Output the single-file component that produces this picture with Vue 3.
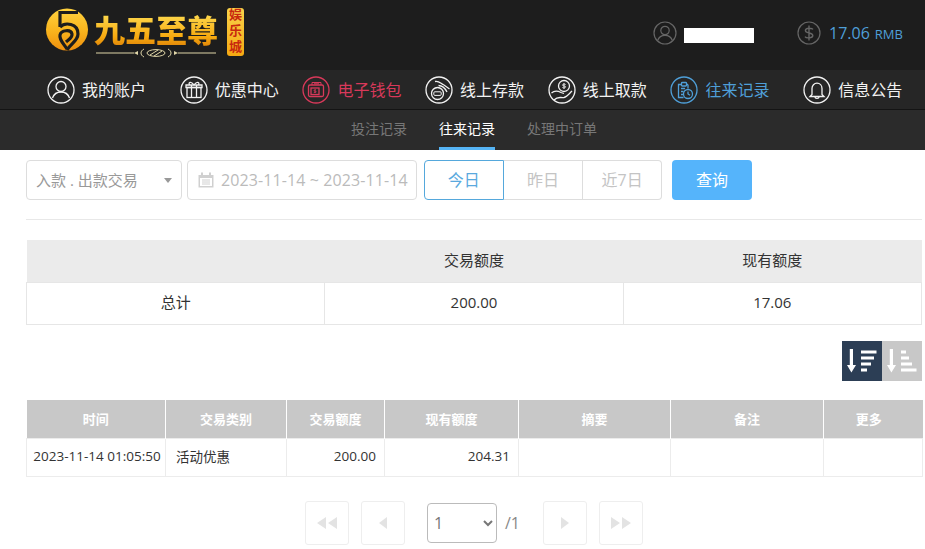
<template>
  <div class="page">
    <header class="top">
      <div class="logo">
        <svg class="logo-mark" width="46" height="46" viewBox="0 0 46 46">
          <defs>
            <linearGradient id="goldDisc" x1="0" y1="0" x2="0" y2="1">
              <stop offset="0" stop-color="#ffd23e" />
              <stop offset="0.55" stop-color="#f9b31c" />
              <stop offset="1" stop-color="#ee8f0e" />
            </linearGradient>
          </defs>
          <circle cx="22" cy="22.5" r="21" fill="url(#goldDisc)" />
          <g fill="none" stroke="#1d1d1d" stroke-width="3.2">
            <path d="M33 5.5 H15 V20" />
            <path d="M15 20 C20 15 33 16 33 27 C33 34 25 37 22 43" />
            <path d="M22 42 C19 37 14 33 15 28 C16 23 26 22 27 27 C27.5 31 23 33 21 35" />
          </g>
        </svg>
        <div class="logo-text">
          <span class="logo-name">九五至尊</span>
          <svg class="logo-rule" width="124" height="10" viewBox="0 0 124 10">
            <path d="M2 5 H40 M84 5 H122" stroke="#e0d6a8" stroke-width="1" />
            <path d="M40 5 L44 3 L44 7 Z M84 5 L80 3 L80 7 Z" fill="#e0d6a8" />
            <path d="M50 1 C46 3 46 7 50 9 M74 1 C78 3 78 7 74 9" fill="none" stroke="#e0d6a8" stroke-width="1" />
            <ellipse cx="62" cy="5" rx="9" ry="3.4" fill="none" stroke="#e0d6a8" stroke-width="1" />
            <path d="M56 7 L64 2 M60 8 L68 3" stroke="#e0d6a8" stroke-width="1" />
          </svg>
        </div>
        <div class="logo-badge">娱乐城</div>
      </div>
      <div class="account">
        <svg class="head-icon" width="24" height="24" viewBox="0 0 24 24" fill="none" stroke="#666" stroke-width="1.2">
          <circle cx="12" cy="12" r="11" />
          <circle cx="12" cy="9.5" r="4.2" />
          <path d="M4.6 19.5 C6 15.8 9 14.4 12 14.4 C15 14.4 18 15.8 19.4 19.5" />
        </svg>
        <span class="user-mask"></span>
      </div>
      <div class="balance">
        <svg class="head-icon" width="24" height="24" viewBox="0 0 24 24" fill="none" stroke="#666" stroke-width="1.2">
          <circle cx="12" cy="12" r="11" />
          <path d="M16 8.4 C15 6.8 8.4 6.4 8.4 9.6 C8.4 13 15.8 11 15.8 14.6 C15.8 17.6 9 17.4 8 15.6 M12 4.6 V19.4" stroke-width="1.4" />
        </svg>
        <span class="amount">17.06</span>
        <span class="unit">RMB</span>
      </div>
    </header>

    <nav class="main-nav">
      <a v-for="item in navItems" :key="item.label" class="nav-item" :class="item.tone">
        <svg width="28" height="28" viewBox="0 0 28 28" fill="none" stroke="currentColor" stroke-width="1.3">
          <circle cx="14" cy="14" r="13" />
          <template v-if="item.icon === 'user'">
            <circle cx="14" cy="10.5" r="5" />
            <path d="M5.5 22 C7 17.6 10.5 16 14 16 C17.5 16 21 17.6 22.5 22" />
          </template>
          <template v-else-if="item.icon === 'gift'">
            <rect x="7" y="11.5" width="14" height="10" />
            <path d="M6 9 H22 V11.5 H6 Z M11.5 9 V21.5 M16.5 9 V21.5" />
            <path d="M14 9 C11 5 8 6 9.5 9 M14 9 C17 5 20 6 18.5 9" />
          </template>
          <template v-else-if="item.icon === 'wallet'">
            <rect x="6.5" y="9" width="15" height="11.5" rx="1.5" />
            <path d="M10 9 V6.5 H19 V9 M12 7.8 H17" stroke-width="1" />
            <rect x="9" y="12" width="8" height="6.5" />
            <path d="M13 13.5 V17 M11.8 16.4 H13.8 C14.6 16 14.4 15.2 13 15.2 C11.8 15 11.6 14 12.8 13.8 H14" stroke-width="0.8" />
          </template>
          <template v-else-if="item.icon === 'deposit'">
            <circle cx="12.5" cy="17.5" r="6" />
            <rect x="8.8" y="15.8" width="7.4" height="3.6" rx="1" stroke-width="1" />
            <path d="M10 5.5 C14 4.5 16 8 19 9 L24.5 13 M13.5 9.5 C17 9.5 20 12 22 16" />
          </template>
          <template v-else-if="item.icon === 'withdraw'">
            <circle cx="16" cy="10" r="5.5" />
            <path d="M16 7 V13 M14.4 11.5 C15.4 12.2 17.6 12 17.6 10.8 C17.6 9.4 14.5 10.6 14.5 9.1 C14.5 8 16.6 7.8 17.6 8.5" stroke-width="0.9" />
            <path d="M3.5 17 C7 14 10 15 13 16.5 L16 17.5 M6 24 C10 20 12 22 16 21.5 C19 21 21 18 24 15" />
          </template>
          <template v-else-if="item.icon === 'record'">
            <path d="M18 8.5 H16 M12 8.5 H8.5 V21.5 H13.5 M18 8.5 V12.5 M11 12.5 H15 M11 15.5 H13.5 M11 18.5 H13" />
            <rect x="11.5" y="6.5" width="5" height="3.5" rx="0.8" />
            <circle cx="18" cy="18" r="4.5" />
            <path d="M18 15.5 V18 L20 19.2" />
          </template>
          <template v-else>
            <path d="M9 18.5 V12.5 C9 9.4 11.2 7.2 14 7.2 C16.8 7.2 19 9.4 19 12.5 V18.5 L21 20.5 H7 Z" />
            <path d="M12 20.5 C12 23 16 23 16 20.5" />
          </template>
        </svg>
        <span>{{ item.label }}</span>
      </a>
    </nav>

    <div class="sub-nav">
      <a v-for="tab in subTabs" :key="tab" class="sub-tab" :class="{ active: tab === '往来记录' }">{{ tab }}</a>
    </div>

    <main class="content">
      <div class="filters">
        <div class="type-select">
          <span>入款 . 出款交易</span>
          <i class="caret"></i>
        </div>
        <div class="date-range">
          <svg width="18" height="18" viewBox="0 0 18 18">
            <path d="M1.5 4 H16.5 V16.5 H1.5 Z" fill="#d0d0d0" />
            <rect x="4" y="1.5" width="2" height="4" fill="#d0d0d0" />
            <rect x="12" y="1.5" width="2" height="4" fill="#d0d0d0" />
            <rect x="3" y="7" width="12" height="8" fill="#fff" />
            <path d="M5 9 H13 M5 11 H13 M5 13 H13" stroke="#d0d0d0" stroke-width="1" />
          </svg>
          <span>2023-11-14 ~ 2023-11-14</span>
        </div>
        <div class="day-group">
          <button v-for="d in days" :key="d" class="day" :class="{ active: d === '今日' }">{{ d }}</button>
        </div>
        <button class="search">查询</button>
      </div>

      <table class="summary">
        <thead>
          <tr><th></th><th>交易额度</th><th>现有额度</th></tr>
        </thead>
        <tbody>
          <tr><td>总计</td><td>200.00</td><td>17.06</td></tr>
        </tbody>
      </table>

      <div class="sort-bar">
        <button class="sort dark">
          <svg width="30" height="24" viewBox="0 0 30 24" fill="#fff">
            <path d="M2.8 0 H6 V16 H9 L4.4 23.5 L0 16 H2.8 Z" />
            <path d="M14 1.5 H29.5 V4.5 H14 Z M14 7.5 H27 V10.5 H14 Z M14 13.5 H24 V16.5 H14 Z M14 19.5 H20 V22.5 H14 Z" />
          </svg>
        </button>
        <button class="sort light">
          <svg width="30" height="24" viewBox="0 0 30 24" fill="#fff">
            <path d="M2.8 0 H6 V16 H9 L4.4 23.5 L0 16 H2.8 Z" />
            <path d="M14 1.5 H19 V4.5 H14 Z M14 7.5 H22 V10.5 H14 Z M14 13.5 H25 V16.5 H14 Z M14 19.5 H29.5 V22.5 H14 Z" />
          </svg>
        </button>
      </div>

      <table class="records">
        <colgroup>
          <col v-for="c in columns" :key="c.label" :style="{ width: c.width + 'px' }" />
        </colgroup>
        <thead>
          <tr><th v-for="c in columns" :key="c.label">{{ c.label }}</th></tr>
        </thead>
        <tbody>
          <tr>
            <td class="nowrap">2023-11-14 01:05:50</td>
            <td class="left">活动优惠</td>
            <td class="right">200.00</td>
            <td class="right">204.31</td>
            <td></td>
            <td></td>
            <td></td>
          </tr>
        </tbody>
      </table>

      <div class="pager">
        <button class="page-btn first">
          <svg width="22" height="14" viewBox="0 0 22 14" fill="#e3e3e3"><path d="M10 1 V13 L1 7 Z M21 1 V13 L12 7 Z" /></svg>
        </button>
        <button class="page-btn">
          <svg width="10" height="14" viewBox="0 0 10 14" fill="#e3e3e3"><path d="M9 1 V13 L1 7 Z" /></svg>
        </button>
        <select class="page-select"><option>1</option></select>
        <span class="page-total">/1</span>
        <button class="page-btn">
          <svg width="10" height="14" viewBox="0 0 10 14" fill="#e3e3e3"><path d="M1 1 V13 L9 7 Z" /></svg>
        </button>
        <button class="page-btn last">
          <svg width="22" height="14" viewBox="0 0 22 14" fill="#e3e3e3"><path d="M1 1 V13 L10 7 Z M12 1 V13 L21 7 Z" /></svg>
        </button>
      </div>
    </main>
  </div>
</template>

<script setup>
const navItems = [
  { label: '我的账户', icon: 'user' },
  { label: '优惠中心', icon: 'gift' },
  { label: '电子钱包', icon: 'wallet', tone: 'red' },
  { label: '线上存款', icon: 'deposit' },
  { label: '线上取款', icon: 'withdraw' },
  { label: '往来记录', icon: 'record', tone: 'blue' },
  { label: '信息公告', icon: 'bell' },
]
const subTabs = ['投注记录', '往来记录', '处理中订单']
const days = ['今日', '昨日', '近7日']
const columns = [
  { label: '时间', width: 139 },
  { label: '交易类别', width: 121 },
  { label: '交易额度', width: 98 },
  { label: '现有额度', width: 134 },
  { label: '摘要', width: 152 },
  { label: '备注', width: 153 },
  { label: '更多', width: 99 },
]
</script>

<style>
html, body { margin: 0; background: #fff; overflow: hidden; }
</style>

<style scoped>
.page {
  width: 925px; height: 549px; overflow: hidden;
  font-family: "Open Sans", "Noto Sans CJK SC", sans-serif; color: #333;
}
.top {
  height: 70px; background: #1d1d1d; display: flex; align-items: flex-start;
  padding-left: 45px; box-sizing: border-box;
}
.logo { display: flex; align-items: flex-start; width: 608px; padding-top: 7px; }
.logo-text { display: flex; flex-direction: column; margin: 2px 0 0 3px; width: 128px; }
.logo-name {
  font-size: 31px; line-height: 40px; font-weight: 900; white-space: nowrap;
  font-family: "Noto Sans CJK SC", sans-serif;
  background: linear-gradient(#ffe45c, #f7a90f 70%, #d87c08);
  -webkit-background-clip: text; background-clip: text; color: transparent;
}
.logo-rule { margin-top: -1px; }
.logo-badge {
  margin: 1px 0 0 5px; width: 17px; height: 48px; border-radius: 3px; box-sizing: border-box;
  background: linear-gradient(#f9d24a, #f5a912); color: #c8290f;
  writing-mode: vertical-rl; text-align: center; line-height: 17px; letter-spacing: 3px;
  font-size: 13px; font-weight: 700; font-family: "Noto Sans CJK SC", sans-serif;
}
.account { display: flex; align-items: center; width: 144px; margin-top: 21px; }
.user-mask { display: block; width: 70px; height: 15px; margin: 5px 0 0 7px; background: #fff; }
.balance { display: flex; align-items: center; color: #4f9fd8; margin-top: 21px; }
.head-icon { flex: none; }
.amount { font-size: 16px; margin-left: 8px; }
.unit { font-size: 13px; margin-left: 5px; margin-top: 2px; }

.main-nav {
  height: 40px; background: #262626; display: flex; align-items: center;
  padding-left: 47px; gap: 23.7px; box-sizing: border-box;
  border-bottom: 1px solid #141414;
}
.nav-item {
  display: flex; align-items: center; gap: 7px; color: #f2f2f2; font-size: 16px; white-space: nowrap;
}
.nav-item:first-child, .nav-item:nth-child(6) { margin-right: 10px; }
.nav-item span { width: 64px; margin-top: -1px; }
.nav-item.red { color: #d8395a; }
.nav-item.blue { color: #4f9fd8; }

.sub-nav {
  height: 40px; background: #2b2b2b; display: flex; gap: 32px; padding-left: 351px; box-sizing: border-box;
}
.sub-tab {
  font-size: 14px; line-height: 38px; color: #777; height: 40px; box-sizing: border-box;
}
.sub-tab.active { color: #fff; border-bottom: 3px solid #55b4f5; }

.content { padding: 10px 3px 0 26px; }
.filters {
  display: flex; align-items: center; padding-bottom: 19px; border-bottom: 1px solid #e8e8e8;
}
.type-select, .date-range {
  height: 40px; box-sizing: border-box; border: 1px solid #ddd; border-radius: 4px;
  display: flex; align-items: center; color: #999; font-size: 15px;
}
.type-select { width: 156px; padding: 0 9px 2px; justify-content: space-between; margin-right: 5px; white-space: nowrap; }
.caret {
  width: 0; height: 0; margin-top: 2px; border-left: 4px solid transparent; border-right: 4px solid transparent;
  border-top: 5px solid #999;
}
.date-range { width: 230px; padding-left: 9px; gap: 6px; color: #bbb; font-size: 16px; letter-spacing: 0.1px; margin-right: 7px; white-space: nowrap; }
.day-group { display: flex; width: 238px; margin-right: 10px; }
.day {
  width: 80px; height: 40px; border: 1px solid #ddd; border-left: none; background: #fff; padding: 0 0 2px;
  color: #c4c4c4; font: inherit; font-size: 16px;
}
.day:last-child { border-radius: 0 4px 4px 0; width: 79px; }
.day.active { border: 1px solid #55a8dc; color: #5aa9de; border-radius: 4px 0 0 4px; }
.search {
  width: 80px; height: 40px; border: none; border-radius: 4px; background: #55b4fb; color: #fff;
  font: inherit; font-size: 16px; padding: 0 0 2px;
}

.summary {
  width: 896px; margin-top: 20px; border-collapse: collapse; table-layout: fixed; text-align: center; font-size: 15px;
}
.summary th { height: 42px; background: #ebebeb; font-weight: 400; padding: 0 0 2px; box-sizing: border-box; }
.summary td { height: 42px; border: 1px solid #e6e6e6; padding: 0 0 3px; box-sizing: border-box; }

.sort-bar { display: flex; justify-content: flex-end; margin-top: 16px; }
.sort { width: 40px; height: 40px; border: none; padding: 0; display: flex; align-items: center; justify-content: center; }
.sort.dark { background: #2c3e55; }
.sort.light { background: #c8c8c8; }

.records {
  width: 896px; margin-top: 19px; border-collapse: collapse; table-layout: fixed; font-size: 13.5px;
}
.records th {
  height: 38px; background: #c8c8c8; color: #fff; font-weight: 700; font-size: 13px; padding: 0;
  border-left: 1px solid #fff;
}
.records th:first-child { border-left: none; }
.records th:last-child { padding-right: 9px; }
.records td { height: 38px; border: 1px solid #ececec; padding: 0 8px 2px 10px; text-align: center; box-sizing: border-box; }
.records td.nowrap { white-space: nowrap; padding: 0 0 2px 2px; }
.records td.left { text-align: left; }
.records td.right { text-align: right; }

.pager { display: flex; align-items: center; margin: 24px 0 0 279px; }
.page-btn {
  width: 44px; height: 44px; background: #fff; border: 1px solid #eee; border-radius: 3px; padding: 0;
  display: flex; align-items: center; justify-content: center; margin-right: 12px;
}
.page-btn + .page-btn { margin-right: 22px; }
.page-btn.last { margin-right: 0; }
.page-select {
  width: 70px; height: 40px; border: 1px solid #bbb; border-radius: 4px; background: #fff; color: #777;
  font: inherit; font-size: 16px; padding-left: 2px;
}
.page-total { width: 46px; padding-left: 8px; box-sizing: border-box; font-size: 16px; color: #888; }
</style>
